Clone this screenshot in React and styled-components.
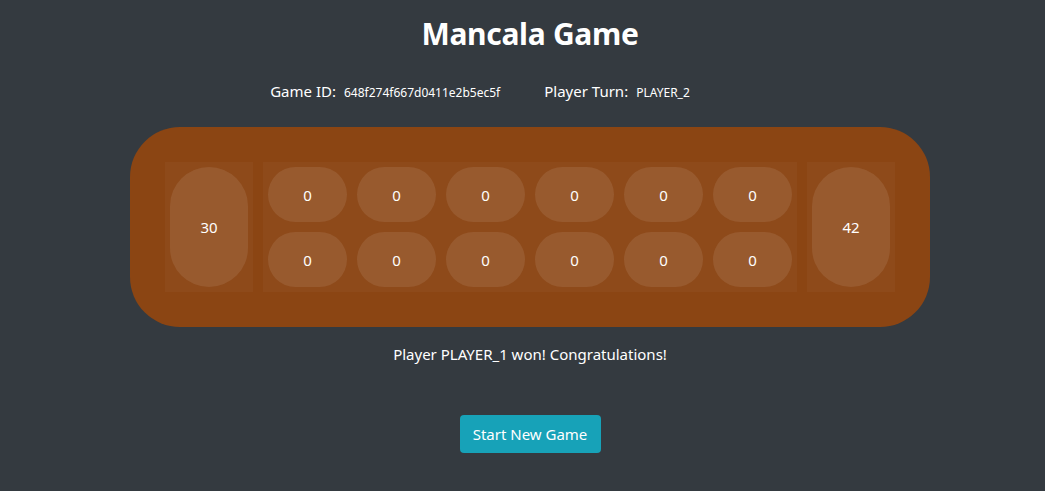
import styled, { createGlobalStyle } from 'styled-components'

const GlobalStyle = createGlobalStyle`
	body {
		margin: 0;
		background: #343a40;
		color: #fff;
		font-family: 'Noto Sans', 'Open Sans', sans-serif;
	}
`

const Page = styled.div`
	display: flex;
	flex-direction: column;
	align-items: center;
	min-height: 491px;
	padding: 14px 0 0 15px;
	box-sizing: border-box;
`

const Title = styled.h1`
	margin: 0;
	font-size: 30px;
	font-weight: 700;
	line-height: 40px;
	letter-spacing: -0.3px;
`

const Info = styled.div`
	display: flex;
	align-items: baseline;
	gap: 44px;
	margin: 25px 100px 0 0;
	font-size: 15px;
	line-height: 24px;
`

const InfoItem = styled.span`
	display: flex;
	align-items: baseline;
	gap: 8px;
`

const Value = styled.span`
	font-size: 12px;
`

const Board = styled.div`
	display: flex;
	gap: 10px;
	margin-top: 22px;
	width: 800px;
	height: 200px;
	padding: 35px;
	box-sizing: border-box;
	background: #8b4513;
	border-radius: 50px;
`

const Store = styled.div`
	display: flex;
	width: 88px;
	padding: 5px;
	box-sizing: border-box;
	background: rgba(255, 255, 255, 0.03);
`

const Pits = styled.div`
	flex: 1;
	display: grid;
	grid-template-columns: repeat(6, 1fr);
	grid-template-rows: repeat(2, 1fr);
	gap: 10px;
	padding: 5px;
	background: rgba(255, 255, 255, 0.03);
`

const Pit = styled.div`
	flex: 1;
	display: flex;
	align-items: center;
	justify-content: center;
	background: rgba(255, 255, 255, 0.09);
	border-radius: ${(p) => (p.$big ? '39px' : '28px')};
	font-size: 15px;
	cursor: pointer;
`

const Message = styled.p`
	margin: 15px 0 0;
	font-size: 15px;
	line-height: 24px;
`

const NewGame = styled.button`
	margin-top: 49px;
	width: 141px;
	height: 38px;
	border: none;
	border-radius: 4px;
	background: #17a2b8;
	color: #fff;
	font-family: inherit;
	font-size: 15px;
	cursor: pointer;
`

const top = [0, 0, 0, 0, 0, 0]
const bottom = [0, 0, 0, 0, 0, 0]

const App = () => {
	return (
		<Page>
			<GlobalStyle />
			<Title>Mancala Game</Title>
			<Info>
				<InfoItem>
					Game ID: <Value>648f274f667d0411e2b5ec5f</Value>
				</InfoItem>
				<InfoItem>
					Player Turn: <Value>PLAYER_2</Value>
				</InfoItem>
			</Info>

			<Board>
				<Store>
					<Pit $big>30</Pit>
				</Store>
				<Pits>
					{top.map((n, i) => (
						<Pit key={'t' + i}>{n}</Pit>
					))}
					{bottom.map((n, i) => (
						<Pit key={'b' + i}>{n}</Pit>
					))}
				</Pits>
				<Store>
					<Pit $big>42</Pit>
				</Store>
			</Board>

			<Message>Player PLAYER_1 won! Congratulations!</Message>
			<NewGame>Start New Game</NewGame>
		</Page>
	)
}

export default App
